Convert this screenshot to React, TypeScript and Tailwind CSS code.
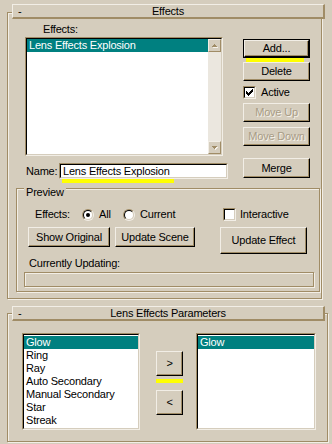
import React from 'react';

const TRI_UP = 'M2 0h1v1h1v1h1v1H0V2h1V1h1z';
const TRI_DOWN = 'M0 0h5v1H4v1H3v1H2V2H1V1H0z';

function TitleBar({ label }: { label: string }) {
  return (
    <div className="relative z-10 ml-[12px] w-[313px] h-[15px] bg-[#d5cdbd] border-t border-l border-t-[#f2eee6] border-l-[#f2eee6] border-r-2 border-b-2 border-r-[#a08c66] border-b-[#a08c66] grid grid-cols-[20px_1fr_20px] items-center leading-[12px]">
      <span className="pl-[5px]">-</span>
      <span className="text-center">{label}</span>
      <span />
    </div>
  );
}

function Btn({
  children,
  w,
  h,
  disabled = false,
}: {
  children: React.ReactNode;
  w: string;
  h: string;
  disabled?: boolean;
}) {
  return (
    <div
      className={`${w} ${h} flex items-center justify-center bg-[#d5cdbd] border border-t-[#f2eee6] border-l-[#f2eee6] border-r-black border-b-black shadow-[inset_-1px_-1px_0_#a08c66] ${
        disabled ? 'text-[#a89c86] [text-shadow:1px_1px_0_#f6f2ea]' : 'text-black'
      }`}
    >
      {children}
    </div>
  );
}

function DefBtn({ children }: { children: React.ReactNode }) {
  return (
    <div className="w-[67px] h-[19px] border border-black">
      <div className="w-full h-full flex items-center justify-center bg-[#d5cdbd] border border-t-[#f2eee6] border-l-[#f2eee6] border-r-black border-b-black shadow-[inset_-1px_-1px_0_#a08c66]">
        {children}
      </div>
    </div>
  );
}

function CheckBox({ checked }: { checked: boolean }) {
  return (
    <div className="w-[13px] h-[13px] shrink-0 border border-t-[#a08c66] border-l-[#a08c66] border-b-[#f2eee6] border-r-[#f2eee6]">
      <div className="w-full h-full bg-white border border-t-black border-l-black border-b-[#d5cdbd] border-r-[#d5cdbd] flex items-center justify-center">
        {checked && (
          <svg width="9" height="9" viewBox="0 0 9 9" shapeRendering="crispEdges">
            <path d="M1 3h1v1h1v1h1V4h1V3h1V2h1V1h1v3H7v1H6v1H5v1H4v1H3V7H2V6H1z" fill="#000" />
          </svg>
        )}
      </div>
    </div>
  );
}

function Radio({ checked }: { checked: boolean }) {
  return (
    <div className="w-[12px] h-[12px] shrink-0 rounded-full border border-t-[#a08c66] border-l-[#a08c66] border-b-[#f2eee6] border-r-[#f2eee6]">
      <div className="w-full h-full rounded-full bg-white border border-t-black border-l-black border-b-[#d5cdbd] border-r-[#d5cdbd] flex items-center justify-center">
        {checked && <div className="w-[4px] h-[4px] rounded-full bg-black" />}
      </div>
    </div>
  );
}

function Sunken({ className, children }: { className: string; children?: React.ReactNode }) {
  return (
    <div className={`${className} border border-t-[#a08c66] border-l-[#a08c66] border-b-[#f2eee6] border-r-[#f2eee6]`}>
      <div className="w-full h-full bg-white border border-t-black border-l-black border-b-[#d5cdbd] border-r-[#d5cdbd] overflow-hidden">
        {children}
      </div>
    </div>
  );
}

function ScrollBtn({ d }: { d: string }) {
  return (
    <div className="w-[13px] h-[13px] bg-[#d5cdbd] border border-t-[#f2eee6] border-l-[#f2eee6] border-r-[#a08c66] border-b-[#a08c66] flex items-center justify-center">
      <svg width="6" height="4" viewBox="0 0 6 4" shapeRendering="crispEdges">
        <path d={d} transform="translate(1 1)" fill="#f6f2ea" />
        <path d={d} fill="#a08c66" />
      </svg>
    </div>
  );
}

function ListItem({ text, selected = false }: { text: string; selected?: boolean }) {
  return (
    <div className={`h-[13px] pl-[2px] whitespace-nowrap ${selected ? 'bg-[#008080] text-white' : 'text-black'}`}>{text}</div>
  );
}

export default function App() {
  return (
    <div className="w-[332px] h-[444px] overflow-hidden bg-[#d5cdbd] text-black text-[11px] leading-[13px] tracking-[-0.2px] font-['Liberation_Sans',Arial,sans-serif] select-none">
      <div className="pt-[4px]">
        <TitleBar label="Effects" />
        <div className="ml-[7px] mt-[-7px] w-[315px] h-[287px] border border-[#a08c66] shadow-[inset_1px_1px_0_#f2eee6,1px_1px_0_#f2eee6]">
          <div className="flex items-start pl-[17px] pt-[10px]">
            {/* left column */}
            <div className="w-[203px] shrink-0">
              <div className="h-[13px] pl-[18px]">Effects:</div>
              <Sunken className="mt-[1px] w-[198px] h-[119px]">
                <div className="flex h-full">
                  <div className="flex-1">
                    <ListItem text="Lens Effects Explosion" selected />
                  </div>
                  <div className="w-[13px] h-full bg-[#ebe7df] flex flex-col justify-between">
                    <ScrollBtn d={TRI_UP} />
                    <ScrollBtn d={TRI_DOWN} />
                  </div>
                </div>
              </Sunken>
              <div className="mt-[7px] flex items-center h-[16px]">
                <span className="w-[34px] pl-[1px] shrink-0">Name:</span>
                <Sunken className="w-[169px] h-[16px]">
                  <div className="pl-[2px] leading-[12px] whitespace-nowrap">Lens Effects Explosion</div>
                </Sunken>
              </div>
              <div className="ml-[37px] w-[112px] h-[4px] bg-[#ffff00]" />
            </div>
            {/* right column */}
            <div className="ml-[15px] mt-[16px] w-[67px] shrink-0 flex flex-col">
              <DefBtn>Add...</DefBtn>
              <div className="ml-[3px] w-[58px] h-[4px] bg-[#ffff00]" />
              <Btn w="w-[67px]" h="h-[19px]">Delete</Btn>
              <div className="mt-[5px] flex items-center h-[13px]">
                <CheckBox checked />
                <span className="ml-[5px]">Active</span>
              </div>
              <div className="mt-[4px]">
                <Btn w="w-[67px]" h="h-[19px]" disabled>Move Up</Btn>
              </div>
              <div className="mt-[5px]">
                <Btn w="w-[67px]" h="h-[19px]" disabled>Move Down</Btn>
              </div>
              <div className="mt-[12px]">
                <Btn w="w-[67px]" h="h-[20px]">Merge</Btn>
              </div>
            </div>
          </div>

          {/* Preview group */}
          <div className="relative ml-[8px] mt-[5px] w-[304px] h-[104px] border border-[#a08c66] shadow-[inset_1px_1px_0_#f2eee6,1px_1px_0_#f2eee6]">
            <span className="absolute left-[7px] top-[-3px] px-[2px] bg-[#d5cdbd]">Preview</span>
            <div className="mt-[19px] h-[13px] flex items-center">
              <span className="w-[65px] pl-[18px] shrink-0">Effects:</span>
              <Radio checked />
              <span className="ml-[5px] w-[24px] shrink-0">All</span>
              <Radio checked={false} />
              <span className="ml-[5px] w-[83px] shrink-0">Current</span>
              <CheckBox checked={false} />
              <span className="ml-[4px]">Interactive</span>
            </div>
            <div className="mt-[6px] flex items-start">
              <div className="ml-[11px]">
                <Btn w="w-[82px]" h="h-[20px]">Show Original</Btn>
              </div>
              <div className="ml-[5px]">
                <Btn w="w-[80px]" h="h-[20px]">Update Scene</Btn>
              </div>
              <div className="ml-[25px]">
                <Btn w="w-[87px]" h="h-[27px]">Update Effect</Btn>
              </div>
            </div>
            <div className="mt-[3px] h-[13px] pl-[12px]">Currently Updating:</div>
            <div className="mt-[2px] ml-[7px] w-[290px] h-[15px] border border-[#a08c66] shadow-[inset_1px_1px_0_#f2eee6,1px_1px_0_#f2eee6]" />
          </div>
        </div>

        {/* Rollout 2 */}
        <div className="mt-[7px]">
          <TitleBar label="Lens Effects Parameters" />
        </div>
        <div className="ml-[7px] mt-[-8px] w-[321px] h-[129px] border border-[#a08c66] shadow-[inset_1px_1px_0_#f2eee6,1px_1px_0_#f2eee6]">
          <div className="mt-[19px] pl-[14px] flex items-start">
            <Sunken className="w-[118px] h-[97px] shrink-0">
              <div className="pt-[1px]">
                <ListItem text="Glow" selected />
                <ListItem text="Ring" />
                <ListItem text="Ray" />
                <ListItem text="Auto Secondary" />
                <ListItem text="Manual Secondary" />
                <ListItem text="Star" />
                <ListItem text="Streak" />
              </div>
            </Sunken>
            <div className="ml-[16px] mt-[18px] w-[27px] shrink-0 flex flex-col">
              <Btn w="w-[27px]" h="h-[25px]">&gt;</Btn>
              <div className="mt-[3px] w-[27px] h-[4px] bg-[#ffff00]" />
              <div className="mt-[7px]">
                <Btn w="w-[27px]" h="h-[25px]">&lt;</Btn>
              </div>
            </div>
            <Sunken className="ml-[13px] w-[120px] h-[97px] shrink-0">
              <div className="pt-[1px]">
                <ListItem text="Glow" selected />
              </div>
            </Sunken>
          </div>
        </div>
      </div>
    </div>
  );
}
